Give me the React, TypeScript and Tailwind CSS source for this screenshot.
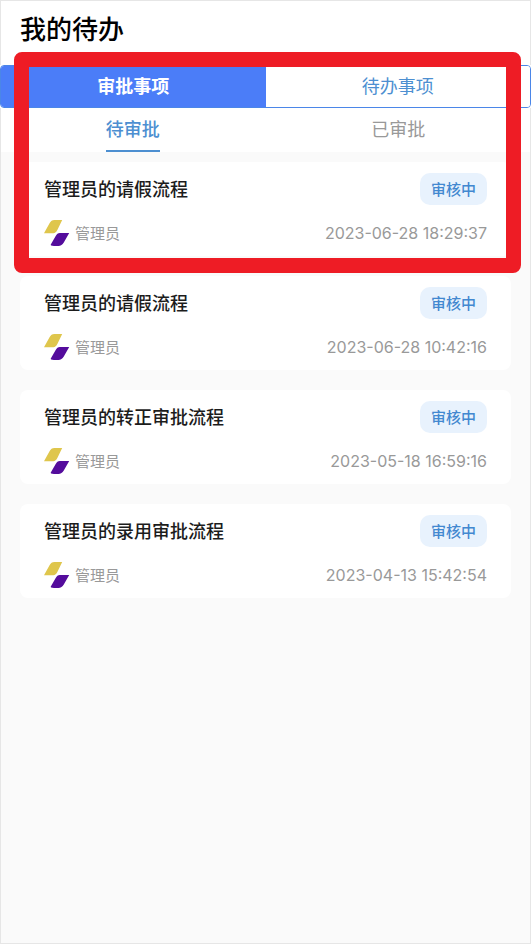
import { useState } from 'react';
import clsx from 'clsx';

interface Approval {
  id: number;
  title: string;
  user: string;
  time: string;
}

const APPROVALS: Approval[] = [
  { id: 1, title: '管理员的请假流程', user: '管理员', time: '2023-06-28 18:29:37' },
  { id: 2, title: '管理员的请假流程', user: '管理员', time: '2023-06-28 10:42:16' },
  { id: 3, title: '管理员的转正审批流程', user: '管理员', time: '2023-05-18 16:59:16' },
  { id: 4, title: '管理员的录用审批流程', user: '管理员', time: '2023-04-13 15:42:54' },
];

const MAIN_TABS = ['审批事项', '待办事项'];
const SUB_TABS = ['待审批', '已审批'];

function Logo() {
  return (
    <svg viewBox="0 0 26 26" className="h-[26px] w-[26px]" aria-hidden="true">
      <path d="M0 13.2 L5.4 3.4 Q7.2 0 10.4 0 H18.2 L13.6 9.4 Q11.8 13.2 9.4 13.2 Z" fill="#dfc64c" />
      <path d="M25.2 13 L19.8 22.6 Q17.8 26 14.4 26 H10 Q6 26 6.8 24.6 L11.4 16.4 Q13.2 13 15.8 13 Z" fill="#540c9c" />
    </svg>
  );
}

function ApprovalCard({ item }: { item: Approval }) {
  return (
    <li className="rounded-lg bg-white px-6 pt-[11px] pb-2.5">
      <div className="flex h-8 items-center justify-between">
        <h2 className="pt-0.5 text-lg font-medium text-[#1c1c1c]">{item.title}</h2>
        <span className="h-8 rounded-[10px] bg-[#e8f2fd] px-[11px] pt-0.5 text-[15px] leading-[30px] font-medium text-[#4288d0]">
          审核中
        </span>
      </div>
      <div className="mt-[15px] flex h-[26px] items-center justify-between text-[#999]">
        <div className="flex items-center gap-[5px]">
          <Logo />
          <span className="pt-0.5 text-[15px]">{item.user}</span>
        </div>
        <time className="text-base">{item.time}</time>
      </div>
    </li>
  );
}

export default function App() {
  const [mainTab, setMainTab] = useState(0);
  const [subTab, setSubTab] = useState(0);

  return (
    <div className="relative min-h-screen bg-[#fafafa] font-['Inter','Noto_Sans_CJK_SC',sans-serif]">
      <header className="bg-white px-5 pt-2.5 pb-[15px]">
        <h1 className="text-[26px] leading-10 font-medium text-black">我的待办</h1>
      </header>

      {/* 主标签 */}
      <div className="relative z-10 bg-white">
        <div className="flex overflow-hidden rounded border border-[#4b86e8]" role="tablist">
          {MAIN_TABS.map((label, i) => (
            <button
              key={label}
              type="button"
              role="tab"
              aria-selected={mainTab === i}
              onClick={() => setMainTab(i)}
              className={clsx(
                'h-[41px] flex-1 text-lg',
                mainTab === i ? 'bg-[#4b7df8] font-bold text-white' : 'bg-white text-[#4d8fd1]',
              )}
            >
              {label}
            </button>
          ))}
        </div>
      </div>

      {/* 子标签 */}
      <div className="flex bg-white" role="tablist">
        {SUB_TABS.map((label, i) => (
          <div key={label} className="flex flex-1 justify-center">
            <button
              type="button"
              role="tab"
              aria-selected={subTab === i}
              onClick={() => setSubTab(i)}
              className={clsx(
                'h-11 border-b-2 pt-0.5 text-lg',
                subTab === i ? 'border-[#4d8fd1] font-medium text-[#4d8fd1]' : 'border-transparent text-[#999]',
              )}
            >
              {label}
            </button>
          </div>
        ))}
      </div>

      <ul className="flex flex-col gap-5 px-5 pt-2.5 pb-5">
        {APPROVALS.map((item) => (
          <ApprovalCard key={item.id} item={item} />
        ))}
      </ul>

      {/* 页面外框 */}
      <div className="pointer-events-none absolute inset-0 border border-[#e6e6e6]" />

      {/* 红色标注框 */}
      <div className="pointer-events-none absolute top-[52px] right-2.5 left-3.5 z-20 h-[221px] rounded-lg border-[15px] border-[#ee1c25]" />
    </div>
  );
}
